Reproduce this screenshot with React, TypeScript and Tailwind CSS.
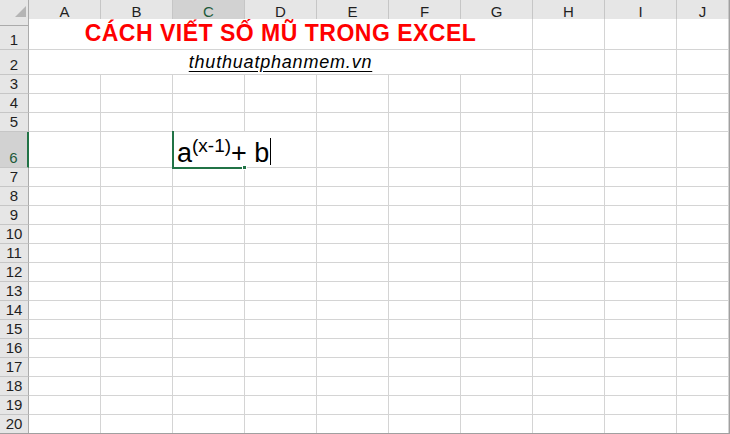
import React from "react";

const cols = ["A", "B", "C", "D", "E", "F", "G", "H", "I", "J"];

const rowHeights: Record<number, string> = {
  1: "h-[31px]",
  2: "h-[25px]",
  6: "h-[36px]",
};

const gridCols = "grid grid-cols-[29px_repeat(9,72px)_1fr]";
const font = "font-['Liberation_Sans',Arial,sans-serif]";

function Corner() {
  return (
    <div className="relative bg-[#e6e6e6] border-r border-b border-[#ababab]">
      <svg width="29" height="19" className="absolute left-0 top-0">
        <polygon points="26,6 26,17 15,17" fill="#b5b5b5" />
      </svg>
    </div>
  );
}

function ColHeader({ label }: { label: string }) {
  const active = label === "C";
  return (
    <div
      className={
        active
          ? "flex items-center justify-center bg-[#d2d2d2] border-r border-[#c6c6c6] border-b-2 border-b-[#217346] text-[15px] text-[#1d5a3a] pt-[1px]"
          : "flex items-center justify-center bg-[#e6e6e6] border-r border-[#c6c6c6] border-b border-b-[#ababab] text-[15px] text-[#1f1f1f]"
      }
    >
      {label}
    </div>
  );
}

function RowHeader({ n }: { n: number }) {
  const active = n === 6;
  return (
    <div
      className={
        active
          ? "flex items-end justify-center bg-[#d2d2d2] border-r-2 border-r-[#217346] border-b border-[#c6c6c6] text-[15px] leading-none pb-[2px] text-[#1d5a3a]"
          : "flex items-end justify-center bg-[#e6e6e6] border-r border-r-[#ababab] border-b border-[#c6c6c6] text-[15px] leading-none pb-[2px] text-[#1f1f1f]"
      }
    >
      {n}
    </div>
  );
}

function Cell() {
  return <div className="border-r border-b border-[#d4d4d4] bg-white" />;
}

function EditCell() {
  return (
    <div className="relative border-b border-[#d4d4d4] bg-white">
      {/* in-cell editor overflowing into D6 */}
      <div className="absolute left-[4px] bottom-[1px] z-10 flex items-end whitespace-nowrap bg-white text-black leading-[26px]">
        <span className="text-[27px]">a</span>
        <span className="relative bottom-[11px] text-[19px] leading-none">(x-1)</span>
        <span className="text-[27px]">+ b</span>
        <span className="mb-[1px] ml-[1px] inline-block h-[27px] w-px bg-black" />
      </div>
      {/* selection border */}
      <div className="absolute left-[-1px] top-[-1px] z-20 h-[37px] w-[2px] bg-[#217346]" />
      <div className="absolute left-[-1px] bottom-[-2px] z-20 h-[2px] w-[71px] bg-[#217346]" />
      <div className="absolute left-[69px] bottom-[-3px] z-20 h-[5px] w-[5px] bg-[#217346] border border-white" />
    </div>
  );
}

function Row({ n }: { n: number }) {
  const h = rowHeights[n] ?? "h-[19px]";
  if (n === 1 || n === 2) {
    return (
      <div className={`${gridCols} ${h}`}>
        <RowHeader n={n} />
        <div className="col-span-7 flex items-end justify-center border-r border-b border-[#d4d4d4] bg-white leading-none">
          {n === 1 ? (
            <span className="pb-[4px] text-[23px] font-bold tracking-[0.5px] text-[#ff0000]">
              CÁCH VIẾT SỐ MŨ TRONG EXCEL
            </span>
          ) : (
            <span className="pb-[3px] text-[18px] italic tracking-[0.8px] text-black underline underline-offset-[3px]">
              thuthuatphanmem.vn
            </span>
          )}
        </div>
        <Cell />
        <Cell />
        <Cell />
      </div>
    );
  }
  return (
    <div className={`${gridCols} ${h}`}>
      <RowHeader n={n} />
      {cols.map((c) => (n === 6 && c === "C" ? <EditCell key={c} /> : <Cell key={c} />))}
    </div>
  );
}

export default function App() {
  const rows = Array.from({ length: 20 }, (_, i) => i + 1);
  return (
    <div className={`${font} h-[434px] w-[730px] overflow-hidden border-r border-b border-[#a0a0a0] bg-white`}>
      <div className={`${gridCols} h-[19px]`}>
        <Corner />
        {cols.map((c) => (
          <ColHeader key={c} label={c} />
        ))}
      </div>
      {rows.map((n) => (
        <Row key={n} n={n} />
      ))}
    </div>
  );
}
